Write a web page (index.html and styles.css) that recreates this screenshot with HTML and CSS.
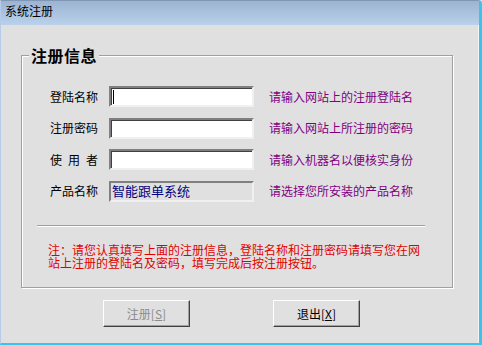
FILE: index.html
```html
<!DOCTYPE html>
<html>
<head>
  <meta charset="utf-8">
  <title>系统注册</title>
  <link rel="stylesheet" href="styles.css">
</head>
<body>
  <div class="window">
    <div class="titlebar">系统注册</div>
    <div class="client">
      <div class="group">
        <div class="group-title">注册信息</div>
        <div class="fields">
          <div class="field">
            <span class="label">登陆名称</span>
            <div class="box"><span class="caret"></span></div>
            <span class="hint">请输入网站上的注册登陆名</span>
          </div>
          <div class="field">
            <span class="label">注册密码</span>
            <div class="box"></div>
            <span class="hint">请输入网站上所注册的密码</span>
          </div>
          <div class="field">
            <span class="label spaced">使用者</span>
            <div class="box"></div>
            <span class="hint">请输入机器名以便核实身份</span>
          </div>
          <div class="field">
            <span class="label">产品名称</span>
            <div class="box readonly">智能跟单系统</div>
            <span class="hint">请选择您所安装的产品名称</span>
          </div>
        </div>
        <div class="rule"></div>
        <p class="note">注：请您认真填写上面的注册信息，登陆名称和注册密码请填写您在网站上注册的登陆名及密码，填写完成后按注册按钮。</p>
      </div>
      <div class="buttons">
        <button class="btn" disabled>注册[<u>S</u>]</button>
        <button class="btn">退出[<u>X</u>]</button>
      </div>
    </div>
  </div>
</body>
</html>
```

FILE: styles.css
```css
body {
  margin: 0;
  padding: 0;
  font-family: "Noto Sans CJK SC", "DejaVu Sans", sans-serif;
  font-size: 12px;
  color: #000;
  background: #e0e0e0;
}

.window {
  width: 482px;
  height: 345px;
  box-sizing: border-box;
  display: flex;
  flex-direction: column;
  border-left: 1px solid #b4cce8;
  border-right: 3px solid #38c4ef;
  border-bottom: 2px solid #38c4ef;
  border-top: 1px solid #7f97b3;
  border-top-right-radius: 4px;
}

.titlebar {
  height: 24px;
  line-height: 20px;
  padding-left: 4px;
  background: linear-gradient(#9cb4d2, #b9d1ea);
}

.client {
  flex: 1;
  background: #e0e0e0;
  border-right: 1px solid #f4f4f4;
}

/* etched group box with its caption sitting on the top line */
.group {
  margin: 30px 0 0 20px;
  width: 432px;
  height: 233px;
  box-sizing: border-box;
  border: 1px solid #a0a0a0;
  box-shadow: inset 1px 1px 0 #fff, 1px 1px 0 #fff;
}

.group-title {
  width: fit-content;
  margin: -11px 0 0 7px;
  padding: 0 2px;
  background: #e0e0e0;
  font-size: 16px;
  font-weight: bold;
  line-height: 20px;
  letter-spacing: 0.5px;
}

.fields {
  margin: 21px 0 0 28px;
  display: flex;
  flex-direction: column;
  gap: 10.5px;
}

.field {
  display: flex;
  align-items: center;
  height: 21px;
}

.label {
  width: 48px;
  line-height: 14px;
  margin-right: 11px;
}

.label.spaced {
  letter-spacing: 6px;
  width: 54px;
  margin-right: 5px;
}

.box {
  width: 145px;
  height: 21px;
  box-sizing: border-box;
  background: #fff;
  border: 2px solid;
  border-color: #808080 #f0f0f0 #f0f0f0 #808080;
  box-shadow: inset 1px 1px 0 #404040;
  display: flex;
  align-items: center;
  padding-left: 2px;
  margin-right: 15px;
}

.box.readonly {
  background: #e0e0e0;
  box-shadow: none;
  color: #000080;
  font-size: 13px;
  line-height: 16px;
  align-items: flex-start;
  padding-left: 1px;
}

.caret {
  width: 1px;
  height: 14px;
  background: #000;
}

.hint {
  color: #800080;
  line-height: 14px;
}

.rule {
  margin: 23px 0 0 15px;
  width: 388px;
  height: 1px;
  background: #a0a0a0;
  border-bottom: 1px solid #fff;
}

.note {
  margin: 16px 0 0 26px;
  width: 375px;
  color: #e00000;
  line-height: 13px;
}

.buttons {
  margin-top: 12px;
  padding-left: 102px;
  display: flex;
  gap: 83px;
}

.btn {
  width: 87px;
  height: 27px;
  box-sizing: border-box;
  background: #e0e0e0;
  font-family: inherit;
  font-size: 12px;
  color: #000;
  border: 1px solid;
  border-color: #fff #404040 #404040 #fff;
  box-shadow: inset -1px -1px 0 #a0a0a0;
  padding: 0;
}

.btn:disabled {
  color: #8c8c8c;
}
```
